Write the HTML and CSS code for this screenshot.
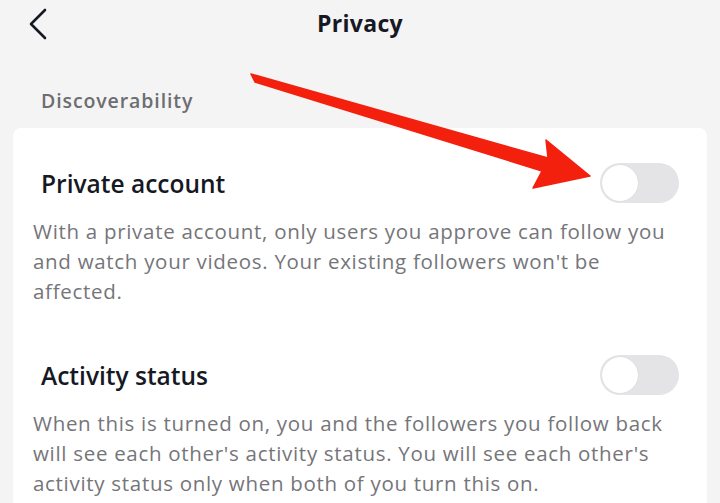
FILE: index.html
```html
<!DOCTYPE html>
<html lang="en">
<head>
<meta charset="utf-8">
<title>Privacy</title>
<link rel="stylesheet" href="styles.css">
</head>
<body>
<div class="screen">
  <header class="topbar">
    <button class="back" aria-label="Back">
      <svg width="20" height="32" viewBox="0 0 20 32"><path d="M17 2 L3 16 L17 30" fill="none" stroke="#161823" stroke-width="2.6" stroke-linecap="round" stroke-linejoin="round"/></svg>
    </button>
    <h1 class="title">Privacy</h1>
    <span class="spacer"></span>
  </header>
  <div class="section-label">Discoverability</div>
  <section class="card">
    <div class="setting">
      <div class="setting-row">
        <span class="setting-name">Private account</span>
        <span class="toggle"><span class="knob"></span></span>
      </div>
      <p class="setting-desc">With a private account, only users you approve can follow you and watch your videos. Your existing followers won't be affected.</p>
    </div>
    <div class="setting">
      <div class="setting-row">
        <span class="setting-name">Activity status</span>
        <span class="toggle"><span class="knob"></span></span>
      </div>
      <p class="setting-desc">When this is turned on, you and the followers you follow back will see each other's activity status. You will see each other's activity status only when both of you turn this on.</p>
    </div>
  </section>
  <svg class="annotation" width="720" height="503" viewBox="0 0 720 503">
    <polygon points="251,74 548,158 546,140 590,176 533,188 542,171 255,82" fill="#f4200e" stroke="#f4200e" stroke-width="1.5" stroke-linejoin="round"/>
  </svg>
</div>
</body>
</html>
```
FILE: styles.css
```css
* { box-sizing: border-box; }
html, body { margin: 0; padding: 0; }
body {
  background: #f4f4f4;
  font-family: "Open Sans", "Liberation Sans", sans-serif;
  color: #161823;
  width: 720px;
  height: 503px;
  overflow: hidden;
}
.screen {
  position: relative;
  width: 720px;
  height: 503px;
  display: flex;
  flex-direction: column;
}
.topbar {
  height: 48px;
  display: flex;
  align-items: center;
  padding: 0 0 0 28px;
}
.back {
  border: 0;
  background: none;
  padding: 0;
  width: 20px;
  height: 32px;
  display: flex;
  margin-top: -1px;
}
.title {
  flex: 1;
  margin: 0 48px 0 0;
  text-align: center;
  font-size: 23px;
  font-weight: 700;
  letter-spacing: 0.3px;
  line-height: 30px;
  margin-top: -2px;
}
.spacer { width: 0; }
.section-label {
  padding: 40px 0 0 41px;
  height: 80px;
  font-size: 19.5px;
  font-weight: 600;
  letter-spacing: 0.9px;
  color: #6d6d72;
  line-height: 26px;
}
.card {
  margin: 0 13px;
  background: #fff;
  border-radius: 8px 8px 0 0;
  flex: 1;
  padding: 35px 28px 0 20px;
}
.setting + .setting { margin-top: 49px; }
.setting-row {
  display: flex;
  align-items: center;
  justify-content: space-between;
  height: 40px;
}
.setting-name {
  padding-left: 8px;
  font-size: 24.5px;
  font-weight: 600;
  color: #161823;
}
.toggle {
  width: 79px;
  height: 40px;
  border-radius: 20px;
  background: #e4e4e6;
  position: relative;
  display: block;
}
.knob {
  position: absolute;
  left: 2px;
  top: 2px;
  width: 36px;
  height: 36px;
  border-radius: 50%;
  background: #fff;
  box-shadow: 0 0 1px rgba(0,0,0,0.15);
}
.setting-desc {
  margin: 13px 0 0 0;
  padding-right: 2px;
  font-size: 20.5px;
  letter-spacing: 0.7px;
  line-height: 30px;
  color: #75757a;
}
.annotation {
  position: absolute;
  left: 0;
  top: 0;
  pointer-events: none;
}
```
